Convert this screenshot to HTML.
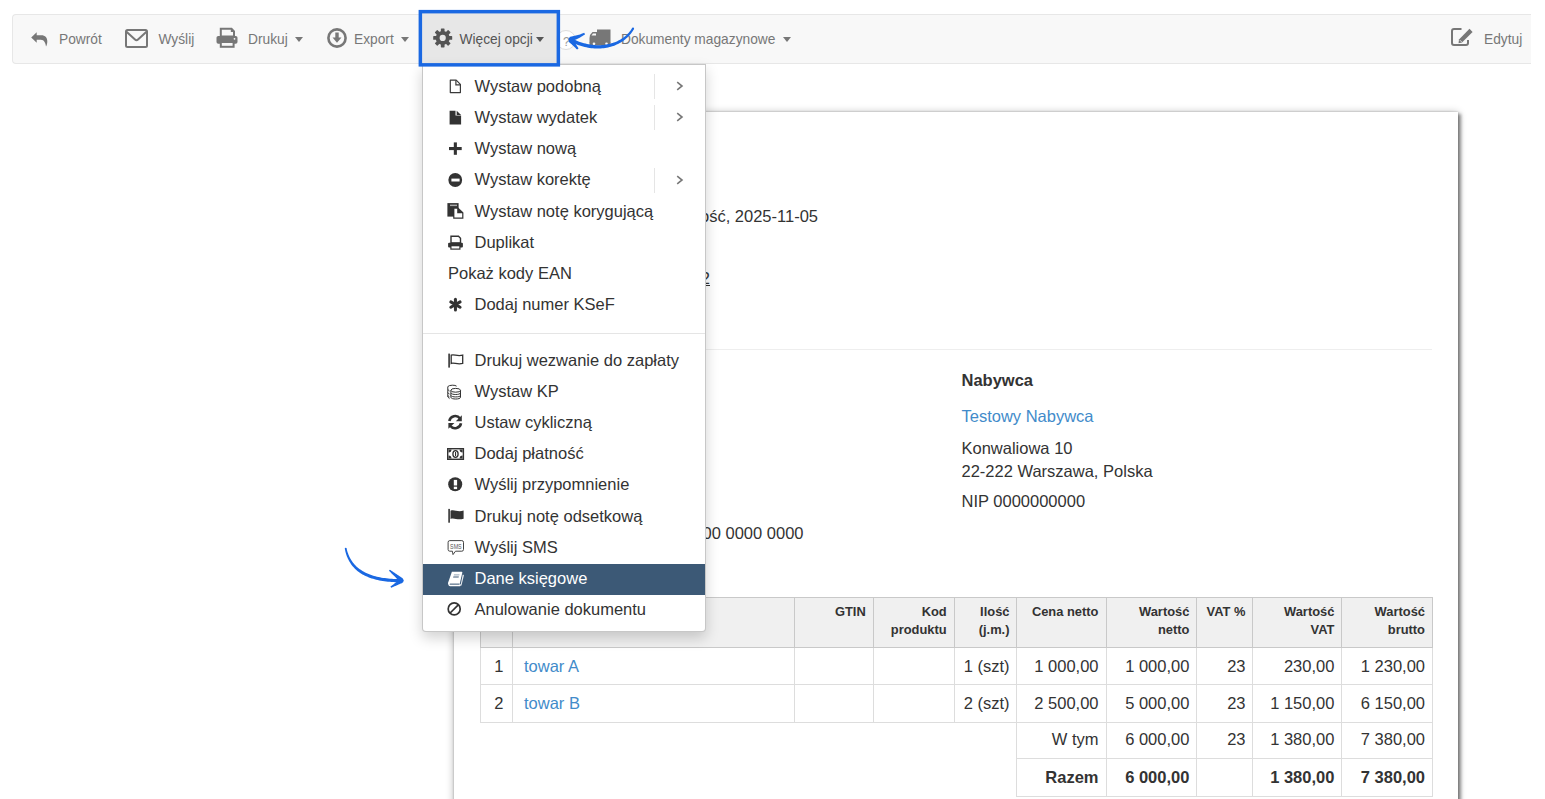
<!DOCTYPE html>
<html><head><meta charset="utf-8"><style>
html,body{margin:0;padding:0;background:#fff;width:1545px;height:799px;overflow:hidden;position:relative;font-family:"Liberation Sans",sans-serif}
.a{position:absolute}
.t{position:absolute;white-space:nowrap;line-height:20px}
svg{position:absolute;overflow:visible}
#tb{left:12px;top:14px;width:1518px;height:48px;background:#f8f8f8;border:1px solid #e7e7e7;border-right:none;border-radius:4px 0 0 4px}
.tbt{font-size:13.75px;color:#777}
.caret{position:absolute;width:0;height:0;border-left:4.5px solid transparent;border-right:4.5px solid transparent;border-top:5px solid #777}
#page{left:454px;top:112px;width:1004px;height:760px;background:#fff;box-shadow:0 1px 8px rgba(0,0,0,.3),0 0 2px rgba(0,0,0,.22),3px 2px 3px rgba(0,0,0,.38)}
.dt{font-size:16.5px;color:#333}
#menu{left:422px;top:64px;width:282px;height:566px;background:#fff;border:1px solid rgba(0,0,0,.22);border-radius:0 0 4px 4px;box-shadow:0 6px 14px rgba(0,0,0,.18)}
.mt{font-size:16.5px;color:#333}
</style></head><body>

<div id="tb" class="a"></div>
<svg style="left:31px;top:32px" width="16" height="15" viewBox="0 0 16 15"><path d="M0.2 5.6 L5.7 0.2 V3.3 H10.2 C14.3 3.3 16.6 6 16.3 10 C16.1 12 15.6 13.6 15 14.6 C14.6 11.3 13.3 7.8 9.8 7.8 H5.7 V10.8 Z" fill="#777"/></svg>
<div class="t tbt" style="left:59px;top:30px">Powrót</div>
<svg style="left:125px;top:29px" width="23" height="19" viewBox="0 0 23 19"><rect x="1" y="1" width="21" height="17" rx="1.5" fill="none" stroke="#777" stroke-width="2"/><path d="M1.5 2.8 L10 10.6 Q11.5 12 13 10.6 L21.5 2.8" fill="none" stroke="#777" stroke-width="2"/></svg>
<div class="t tbt" style="left:158.5px;top:30px">Wyślij</div>
<svg style="left:216px;top:27px" width="22" height="21" viewBox="0 0 22 21"><path d="M4.8 1.8 H15.5 L18 4.3 V9.5 H4.8 Z" fill="none" stroke="#777" stroke-width="2"/><path d="M14.8 1 V5 H18.5" fill="#777"/><rect x="0.5" y="9" width="21" height="7.8" rx="1.8" fill="#777"/><rect x="4.8" y="15" width="12.8" height="4.8" fill="#f8f8f8" stroke="#777" stroke-width="2"/><circle cx="18.5" cy="11.8" r="0.9" fill="#f8f8f8"/></svg>
<div class="t tbt" style="left:248px;top:30px">Drukuj</div>
<div class="caret" style="left:295px;top:37px"></div>
<svg style="left:327px;top:28px" width="20" height="20" viewBox="0 0 20 20"><circle cx="10" cy="10" r="8.6" fill="none" stroke="#777" stroke-width="2.6"/><path d="M8.3 4.5 L11.7 4.5 L11.7 9.5 L14.5 9.5 L10 14.8 L5.5 9.5 L8.3 9.5 Z" fill="#777"/></svg>
<div class="t tbt" style="left:354px;top:30px">Export</div>
<div class="caret" style="left:401px;top:37px"></div>
<div class="a" style="left:422px;top:13px;width:135px;height:50px;background:#e7e7e7"></div>
<svg style="left:0;top:0" width="1" height="1"><circle cx="442.7" cy="37.9" r="7.0" fill="#555"/><rect x="440.85" y="28.40" width="3.7" height="9.50" rx="0.6" fill="#555" transform="rotate(0 442.7 37.9)"/><rect x="440.85" y="28.40" width="3.7" height="9.50" rx="0.6" fill="#555" transform="rotate(45 442.7 37.9)"/><rect x="440.85" y="28.40" width="3.7" height="9.50" rx="0.6" fill="#555" transform="rotate(90 442.7 37.9)"/><rect x="440.85" y="28.40" width="3.7" height="9.50" rx="0.6" fill="#555" transform="rotate(135 442.7 37.9)"/><rect x="440.85" y="28.40" width="3.7" height="9.50" rx="0.6" fill="#555" transform="rotate(180 442.7 37.9)"/><rect x="440.85" y="28.40" width="3.7" height="9.50" rx="0.6" fill="#555" transform="rotate(225 442.7 37.9)"/><rect x="440.85" y="28.40" width="3.7" height="9.50" rx="0.6" fill="#555" transform="rotate(270 442.7 37.9)"/><rect x="440.85" y="28.40" width="3.7" height="9.50" rx="0.6" fill="#555" transform="rotate(315 442.7 37.9)"/><circle cx="442.7" cy="37.9" r="3.1" fill="#e7e7e7"/></svg>
<div class="t tbt" style="left:459.5px;top:30px;color:#555">Więcej opcji</div>
<div class="caret" style="left:536px;top:37px;border-top-color:#555"></div>
<div class="a" style="left:556px;top:30px;width:20px;height:20px;border-radius:50%;border:1px solid #ddd;background:#fff;box-sizing:border-box"></div>
<div class="t" style="left:563px;top:32px;font-size:12px;color:#999">?</div>
<svg style="left:589px;top:29px" width="23" height="17" viewBox="0 0 23 17"><path d="M8 0.5 H21.5 V13.5 H8 Z" fill="#777"/><path d="M0.5 9 L1 6 L3.5 3 H8 V13.5 H0.5 Z" fill="#777"/><path d="M2.5 6.5 L4 4.5 H7 V6.5 Z" fill="#f8f8f8"/><rect x="0.5" y="13" width="21" height="3.5" fill="#777"/><circle cx="5" cy="14.8" r="1.3" fill="#f8f8f8"/><circle cx="17.5" cy="14.8" r="1.3" fill="#f8f8f8"/></svg>
<div class="t tbt" style="left:621px;top:30px">Dokumenty magazynowe</div>
<div class="caret" style="left:783px;top:37px"></div>
<svg style="left:1451px;top:28px" width="23" height="18" viewBox="0 0 23 18"><path d="M10.5 1 H3 Q1 1 1 3 V15 Q1 17 3 17 H15 Q17 17 17 15 V12" fill="none" stroke="#777" stroke-width="2"/><path d="M18.5 0.8 L21.6 3.9 L11 14.5 L7.5 15.2 L8 11.5 Z" fill="#777"/><path d="M9 12.3 L10.5 13.8" stroke="#f8f8f8" stroke-width="1"/></svg>
<div class="t tbt" style="left:1484px;top:30px">Edytuj</div>

<div id="page" class="a"></div>
<div class="t dt" style="right:727px;top:206.4px">Termin płatności: całość, 2025-11-05</div>
<div class="t dt" style="right:835px;top:268px;text-decoration:underline">Nr 2</div>
<div class="a" style="left:480px;top:349px;width:952px;height:1px;background:#eee"></div>
<div class="t dt" style="left:961.5px;top:370px;font-weight:bold">Nabywca</div>
<div class="t dt" style="left:961.5px;top:406px;color:#428bca">Testowy Nabywca</div>
<div class="t dt" style="left:961.5px;top:437.7px">Konwaliowa 10</div>
<div class="t dt" style="left:961.5px;top:461px">22-222 Warszawa, Polska</div>
<div class="t dt" style="left:961.5px;top:491.2px">NIP 0000000000</div>
<div class="t dt" style="right:741.5px;top:523px">Nr konta: 00 0000 0000 0000 0000 0000</div>
<div class="a" style="left:480px;top:597px;width:952px;height:50px;background:#f0f0f0"></div>
<div class="a" style="left:480px;top:647px;width:1px;height:75px;background:#dddddd"></div>
<div class="a" style="left:512px;top:647px;width:1px;height:75px;background:#dddddd"></div>
<div class="a" style="left:794px;top:647px;width:1px;height:75px;background:#dddddd"></div>
<div class="a" style="left:873px;top:647px;width:1px;height:75px;background:#dddddd"></div>
<div class="a" style="left:954px;top:647px;width:1px;height:75px;background:#dddddd"></div>
<div class="a" style="left:1016px;top:647px;width:1px;height:150px;background:#dddddd"></div>
<div class="a" style="left:1106px;top:647px;width:1px;height:150px;background:#dddddd"></div>
<div class="a" style="left:1196px;top:647px;width:1px;height:150px;background:#dddddd"></div>
<div class="a" style="left:1252px;top:647px;width:1px;height:150px;background:#dddddd"></div>
<div class="a" style="left:1341px;top:647px;width:1px;height:150px;background:#dddddd"></div>
<div class="a" style="left:1432px;top:647px;width:1px;height:150px;background:#dddddd"></div>
<div class="a" style="left:480px;top:684px;width:953px;height:1px;background:#dddddd"></div>
<div class="a" style="left:480px;top:722px;width:953px;height:1px;background:#dddddd"></div>
<div class="a" style="left:1016px;top:758px;width:417px;height:1px;background:#dddddd"></div>
<div class="a" style="left:1016px;top:796px;width:417px;height:1px;background:#dddddd"></div>
<div class="a" style="left:480px;top:597px;width:953px;height:1px;background:#c9c9c9"></div>
<div class="a" style="left:480px;top:647px;width:953px;height:1px;background:#c9c9c9"></div>
<div class="a" style="left:480px;top:597px;width:1px;height:51px;background:#c9c9c9"></div>
<div class="a" style="left:512px;top:597px;width:1px;height:51px;background:#c9c9c9"></div>
<div class="a" style="left:794px;top:597px;width:1px;height:51px;background:#c9c9c9"></div>
<div class="a" style="left:873px;top:597px;width:1px;height:51px;background:#c9c9c9"></div>
<div class="a" style="left:954px;top:597px;width:1px;height:51px;background:#c9c9c9"></div>
<div class="a" style="left:1016px;top:597px;width:1px;height:51px;background:#c9c9c9"></div>
<div class="a" style="left:1106px;top:597px;width:1px;height:51px;background:#c9c9c9"></div>
<div class="a" style="left:1196px;top:597px;width:1px;height:51px;background:#c9c9c9"></div>
<div class="a" style="left:1252px;top:597px;width:1px;height:51px;background:#c9c9c9"></div>
<div class="a" style="left:1341px;top:597px;width:1px;height:51px;background:#c9c9c9"></div>
<div class="a" style="left:1432px;top:597px;width:1px;height:51px;background:#c9c9c9"></div>
<div class="t" style="right:679.3px;top:603.9px;font:bold 12.9px 'Liberation Sans';color:#333">GTIN</div>
<div class="t" style="right:598.3px;top:603.9px;font:bold 12.9px 'Liberation Sans';color:#333">Kod</div>
<div class="t" style="right:598.3px;top:622.4px;font:bold 12.9px 'Liberation Sans';color:#333">produktu</div>
<div class="t" style="right:535.5px;top:603.9px;font:bold 12.9px 'Liberation Sans';color:#333">Ilość</div>
<div class="t" style="right:535.5px;top:622.4px;font:bold 12.9px 'Liberation Sans';color:#333">(j.m.)</div>
<div class="t" style="right:446.5px;top:603.9px;font:bold 12.9px 'Liberation Sans';color:#333">Cena netto</div>
<div class="t" style="right:355.6px;top:603.9px;font:bold 12.9px 'Liberation Sans';color:#333">Wartość</div>
<div class="t" style="right:355.6px;top:622.4px;font:bold 12.9px 'Liberation Sans';color:#333">netto</div>
<div class="t" style="right:299.5px;top:603.9px;font:bold 12.9px 'Liberation Sans';color:#333">VAT %</div>
<div class="t" style="right:210.6px;top:603.9px;font:bold 12.9px 'Liberation Sans';color:#333">Wartość</div>
<div class="t" style="right:210.6px;top:622.4px;font:bold 12.9px 'Liberation Sans';color:#333">VAT</div>
<div class="t" style="right:120.0px;top:603.9px;font:bold 12.9px 'Liberation Sans';color:#333">Wartość</div>
<div class="t" style="right:120.0px;top:622.4px;font:bold 12.9px 'Liberation Sans';color:#333">brutto</div>
<div class="t" style="right:1041.5px;top:655.8px;font-size:16.5px;color:#333">1</div>
<div class="t dt" style="left:524px;top:655.8px;color:#428bca">towar A</div>
<div class="t" style="right:535.5px;top:655.8px;font-size:16.5px;color:#333">1 (szt)</div>
<div class="t" style="right:446.5px;top:655.8px;font-size:16.5px;color:#333">1 000,00</div>
<div class="t" style="right:355.6px;top:655.8px;font-size:16.5px;color:#333">1 000,00</div>
<div class="t" style="right:299.5px;top:655.8px;font-size:16.5px;color:#333">23</div>
<div class="t" style="right:210.6px;top:655.8px;font-size:16.5px;color:#333">230,00</div>
<div class="t" style="right:120.0px;top:655.8px;font-size:16.5px;color:#333">1 230,00</div>
<div class="t" style="right:1041.5px;top:692.6px;font-size:16.5px;color:#333">2</div>
<div class="t dt" style="left:524px;top:692.6px;color:#428bca">towar B</div>
<div class="t" style="right:535.5px;top:692.6px;font-size:16.5px;color:#333">2 (szt)</div>
<div class="t" style="right:446.5px;top:692.6px;font-size:16.5px;color:#333">2 500,00</div>
<div class="t" style="right:355.6px;top:692.6px;font-size:16.5px;color:#333">5 000,00</div>
<div class="t" style="right:299.5px;top:692.6px;font-size:16.5px;color:#333">23</div>
<div class="t" style="right:210.6px;top:692.6px;font-size:16.5px;color:#333">1 150,00</div>
<div class="t" style="right:120.0px;top:692.6px;font-size:16.5px;color:#333">6 150,00</div>
<div class="t" style="right:446.5px;top:729.4px;font-size:16.5px;color:#333">W tym</div>
<div class="t" style="right:355.6px;top:729.4px;font-size:16.5px;color:#333">6 000,00</div>
<div class="t" style="right:299.5px;top:729.4px;font-size:16.5px;color:#333">23</div>
<div class="t" style="right:210.6px;top:729.4px;font-size:16.5px;color:#333">1 380,00</div>
<div class="t" style="right:120.0px;top:729.4px;font-size:16.5px;color:#333">7 380,00</div>
<div class="t" style="right:446.5px;top:767.3px;font-size:16.5px;color:#333;font-weight:bold">Razem</div>
<div class="t" style="right:355.6px;top:767.3px;font-size:16.5px;color:#333;font-weight:bold">6 000,00</div>
<div class="t" style="right:210.6px;top:767.3px;font-size:16.5px;color:#333;font-weight:bold">1 380,00</div>
<div class="t" style="right:120.0px;top:767.3px;font-size:16.5px;color:#333;font-weight:bold">7 380,00</div>
<div id="menu" class="a"></div>
<div class="a" style="left:423px;top:333px;width:282px;height:1px;background:#e5e5e5"></div>
<div class="a" style="left:423px;top:563.5px;width:282px;height:31.2px;background:#3c5976"></div>
<div class="t mt" style="left:474.5px;top:76px">Wystaw podobną</div>
<div class="t mt" style="left:474.5px;top:107px">Wystaw wydatek</div>
<div class="t mt" style="left:474.5px;top:138px">Wystaw nową</div>
<div class="t mt" style="left:474.5px;top:169px">Wystaw korektę</div>
<div class="t mt" style="left:474.5px;top:201px">Wystaw notę korygującą</div>
<div class="t mt" style="left:474.5px;top:232px">Duplikat</div>
<div class="t mt" style="left:448px;top:263px">Pokaż kody EAN</div>
<div class="t mt" style="left:474.5px;top:294px">Dodaj numer KSeF</div>
<div class="t mt" style="left:474.5px;top:350px;color:#333">Drukuj wezwanie do zapłaty</div>
<div class="t mt" style="left:474.5px;top:381px;color:#333">Wystaw KP</div>
<div class="t mt" style="left:474.5px;top:412px;color:#333">Ustaw cykliczną</div>
<div class="t mt" style="left:474.5px;top:443px;color:#333">Dodaj płatność</div>
<div class="t mt" style="left:474.5px;top:474px;color:#333">Wyślij przypomnienie</div>
<div class="t mt" style="left:474.5px;top:506px;color:#333">Drukuj notę odsetkową</div>
<div class="t mt" style="left:474.5px;top:537px;color:#333">Wyślij SMS</div>
<div class="t mt" style="left:474.5px;top:568px;color:#fff">Dane księgowe</div>
<div class="t mt" style="left:474.5px;top:599px;color:#333">Anulowanie dokumentu</div>
<div class="a" style="left:654px;top:74.0px;width:1px;height:25px;background:#e5e5e5"></div>
<svg style="left:675.5px;top:81.0px" width="8" height="10" viewBox="0 0 8 10"><path d="M1.2 1.2 L6 5 L1.2 8.8" fill="none" stroke="#777" stroke-width="1.6"/></svg>
<div class="a" style="left:654px;top:105.2px;width:1px;height:25px;background:#e5e5e5"></div>
<svg style="left:675.5px;top:112.2px" width="8" height="10" viewBox="0 0 8 10"><path d="M1.2 1.2 L6 5 L1.2 8.8" fill="none" stroke="#777" stroke-width="1.6"/></svg>
<div class="a" style="left:654px;top:167.5px;width:1px;height:25px;background:#e5e5e5"></div>
<svg style="left:675.5px;top:174.5px" width="8" height="10" viewBox="0 0 8 10"><path d="M1.2 1.2 L6 5 L1.2 8.8" fill="none" stroke="#777" stroke-width="1.6"/></svg>
<svg style="left:0;top:0" width="1" height="1">
<g fill="#333" stroke="none">
<!-- file-o -->
<path d="M450.3 80.2 H456.2 L460.4 84.4 V92.6 H450.3 Z" fill="none" stroke="#3a3a3a" stroke-width="1.2" stroke-linejoin="round"/>
<path d="M455.9 80.2 V84.8 H460.4" fill="none" stroke="#3a3a3a" stroke-width="1.2"/>
<!-- file (filled) -->
<path d="M449.6 110.7 H455.5 V115.6 H461.1 V124.5 H449.6 Z"/>
<path d="M456.7 110.7 L461.1 115 H456.7 Z"/>
<!-- plus -->
<rect x="453.8" y="142.4" width="3.1" height="12.4"/>
<rect x="449" y="147" width="12.7" height="3.1"/>
<!-- minus circle -->
<circle cx="455.25" cy="180" r="6.9"/>
<rect x="451.4" y="178.6" width="8.2" height="2.9" fill="#fff"/>
<!-- copy / nota -->
<rect x="447.4" y="203.1" width="11.2" height="13.5"/>
<rect x="450" y="204.6" width="7" height="1.5" fill="#aaa"/>
<path d="M453.2 207.6 H458.1 L463.4 212.5 V218.7 H453.2 Z" fill="#333"/>
<path d="M454.4 208.8 H457.2 V213.3 H462.2 V217.5 H454.4 Z" fill="#fff"/>
<!-- print -->
<path d="M451 236.3 H458.5 L460.5 238.3 V243 H451 Z" fill="none" stroke="#333" stroke-width="1.4"/>
<rect x="448.1" y="242.8" width="14.8" height="4.8" rx="1"/>
<rect x="450.3" y="245.9" width="10.2" height="3.8"/>
<rect x="451.5" y="246.3" width="7.8" height="2.2" fill="#fff"/>
<!-- asterisk -->
<g stroke="#333" stroke-width="3" stroke-linecap="round">
<path d="M455.45 299.2 V310"/>
<path d="M450.8 301.9 L460.1 307.3"/>
<path d="M450.8 307.3 L460.1 301.9"/>
</g>
<!-- flag-o -->
<rect x="448.3" y="353.6" width="1.6" height="14"/>
<path d="M451.2 355.2 C454 353.8 457 356.8 462.7 355.2 V363.4 C457 365 454 362 451.2 363.4 Z" fill="none" stroke="#333" stroke-width="1.3"/>
<!-- coins / KP -->
<g fill="none" stroke="#333" stroke-width="1.0">
<path d="M456.6 386.2 C455.5 384.8 449 384.8 447.8 386.6 V397 L449.5 398.6"/>
<path d="M447.8 389.5 L449.5 391 M447.8 392.5 L449.5 394.3 M447.8 395.5 L449.5 397"/>
<ellipse cx="455.7" cy="390.3" rx="4.8" ry="1.9"/>
<path d="M450.9 390.3 V397.3 C450.9 399.6 460.5 399.6 460.5 397.3 V390.3"/>
<path d="M450.9 393 C451.5 395 460 395 460.5 393 M450.9 395.5 C451.5 397.4 460 397.4 460.5 395.5"/>
</g>
<!-- refresh -->
<path d="M449.3 421 A6 6 0 0 1 460 418.5" fill="none" stroke="#333" stroke-width="2.6"/>
<path d="M461.8 415.3 V421.2 H455.8 Z"/>
<path d="M461 423.2 A6 6 0 0 1 450.4 426" fill="none" stroke="#333" stroke-width="2.6"/>
<path d="M448.4 428.8 V422.9 H454.4 Z"/>
<!-- money -->
<rect x="447.7" y="448.7" width="15.7" height="10.6" fill="none" stroke="#333" stroke-width="1.4"/>
<path d="M448.5 449.5 H451.5 A3 3 0 0 1 448.5 452.5 Z M462.6 449.5 H459.6 A3 3 0 0 0 462.6 452.5 Z M448.5 458.5 H451.5 A3 3 0 0 0 448.5 455.5 Z M462.6 458.5 H459.6 A3 3 0 0 1 462.6 455.5 Z"/>
<ellipse cx="455.5" cy="454" rx="2.6" ry="3.4" fill="none" stroke="#333" stroke-width="1.3"/>
<rect x="455" y="452" width="1.1" height="4"/>
<!-- exclamation circle -->
<circle cx="455.2" cy="484.2" r="7"/>
<rect x="453.8" y="479.9" width="3.3" height="5.6" fill="#fff"/>
<rect x="453.8" y="486.7" width="3.3" height="2.4" fill="#fff"/>
<!-- flag -->
<rect x="448.3" y="508.9" width="1.6" height="13.8"/>
<path d="M450.5 510.8 C454 509 457.5 512.5 463.6 510.5 V518.7 C457.5 520.7 454 517.2 450.5 519 Z"/>
<!-- sms -->
<path d="M449.8 540.6 H461.8 Q463.5 540.6 463.5 542.3 V549.5 Q463.5 551.2 461.8 551.2 H455.5 L453 554.6 L452.4 551.2 H449.8 Q448.1 551.2 448.1 549.5 V542.3 Q448.1 540.6 449.8 540.6 Z" fill="none" stroke="#444" stroke-width="1"/>
<text x="455.9" y="548.6" font-family="Liberation Sans" font-size="6.6" text-anchor="middle" fill="#555" textLength="11.6" lengthAdjust="spacingAndGlyphs">SMS</text>
<!-- book (white) -->
<path d="M451.9 571.7 H461.6 Q462.5 571.8 462.3 572.8 L459.6 584.6 H449.6 Q447.6 584.6 448 582.9 Z" fill="#fff"/>
<path d="M448.4 583.6 Q448.2 586.3 450.2 586.3 H459.3 Q460.3 586.2 460.6 585.4 L460.9 584.2 H449.6 Z" fill="#fff"/>
<rect x="449.8" y="583.6" width="9.6" height="1" fill="#3c5976"/>
<path d="M462.9 574.4 Q464.2 574.6 463.9 575.6 L461.6 585 Q461.3 585.9 460.4 585.9 L462.6 575 Z" fill="#e8ecf0"/>
<path d="M454 574.2 H459.6 L459.3 575.5 H453.7 Z" fill="#a9b6c3"/>
<path d="M453.4 576.5 H458.9 L458.6 577.6 H453.1 Z" fill="#3c5976"/>
<!-- ban -->
<circle cx="454.2" cy="608.9" r="6" fill="none" stroke="#333" stroke-width="1.7"/>
<path d="M450.1 613 L458.3 604.8" stroke="#333" stroke-width="1.7"/>
</g>
</svg>

<svg style="left:0;top:0" width="1" height="1"><rect x="420.35" y="11.65" width="138" height="53.2" fill="none" stroke="#1a68e2" stroke-width="3.5"/></svg>
<svg style="left:0;top:0" width="1" height="1"><path d="M632.14 28.09 L631.53 29.06 L630.89 30.00 L630.21 30.92 L629.50 31.82 L628.75 32.69 L627.97 33.54 L627.15 34.37 L626.30 35.17 L625.42 35.95 L624.50 36.69 L623.56 37.42 L622.58 38.11 L621.58 38.78 L620.54 39.41 L619.48 40.02 L618.39 40.59 L617.27 41.14 L616.12 41.65 L614.95 42.13 L613.76 42.58 L612.54 42.99 L611.30 43.37 L610.03 43.71 L608.74 44.01 L607.43 44.31 L606.10 44.55 L604.75 44.76 L603.38 44.93 L601.98 45.06 L600.57 45.14 L599.14 45.19 L597.69 45.20 L596.22 45.16 L594.73 45.07 L593.23 44.94 L591.71 44.77 L590.18 44.55 L588.63 44.28 L587.07 43.97 L585.50 43.60 L583.91 43.19 L582.31 42.73 L580.70 42.21 L579.07 41.65 L577.44 41.03 L575.80 40.35 L574.15 39.62 L572.49 38.84 L570.80 37.99 L569.20 41.21 L570.93 42.07 L572.68 42.87 L574.42 43.62 L576.16 44.32 L577.88 44.95 L579.60 45.54 L581.31 46.06 L583.00 46.54 L584.69 46.96 L586.36 47.33 L588.02 47.65 L589.67 47.91 L591.30 48.13 L592.91 48.30 L594.52 48.42 L596.10 48.49 L597.67 48.51 L599.21 48.49 L600.74 48.42 L602.25 48.31 L603.74 48.16 L605.21 47.96 L606.66 47.72 L608.08 47.44 L609.49 47.12 L610.86 46.75 L612.20 46.33 L613.53 45.88 L614.82 45.38 L616.08 44.86 L617.32 44.29 L618.53 43.70 L619.70 43.07 L620.85 42.40 L621.97 41.71 L623.05 40.98 L624.10 40.22 L625.11 39.44 L626.10 38.62 L627.04 37.78 L627.95 36.91 L628.83 36.01 L629.66 35.09 L630.46 34.15 L631.22 33.18 L631.95 32.19 L632.63 31.18 L633.27 30.15 L633.86 29.11 Z" fill="#1a68e2"/><path d="M584.12 32.64 L583.08 33.17 L582.07 33.62 L581.04 34.02 L580.02 34.38 L578.99 34.70 L577.95 34.99 L576.91 35.25 L575.86 35.50 L574.80 35.75 L573.73 35.99 L572.65 36.23 L571.56 36.49 L570.47 36.77 L569.39 37.07 L571.21 41.73 L572.16 41.24 L573.10 40.77 L574.06 40.31 L575.04 39.86 L576.04 39.40 L577.05 38.93 L578.07 38.45 L579.09 37.94 L580.11 37.41 L581.13 36.85 L582.15 36.25 L583.15 35.60 L584.13 34.90 L585.08 34.16 Z" fill="#1a68e2"/><path d="M578.50 48.44 L578.00 47.62 L577.50 46.82 L577.01 46.03 L576.53 45.26 L576.05 44.50 L575.59 43.76 L575.14 43.02 L574.70 42.30 L574.26 41.59 L573.84 40.90 L573.42 40.21 L573.02 39.54 L572.62 38.87 L572.24 38.22 L568.36 41.38 L568.93 41.89 L569.50 42.42 L570.09 42.95 L570.68 43.49 L571.28 44.04 L571.89 44.60 L572.51 45.18 L573.14 45.76 L573.77 46.36 L574.42 46.97 L575.08 47.60 L575.74 48.24 L576.41 48.89 L577.10 49.56 Z" fill="#1a68e2"/><path d="M344.82 548.79 L345.08 550.11 L345.38 551.41 L345.71 552.69 L346.08 553.95 L346.48 555.18 L346.93 556.39 L347.41 557.57 L347.92 558.73 L348.48 559.86 L349.07 560.97 L349.69 562.06 L350.36 563.11 L351.06 564.15 L351.81 565.15 L352.59 566.13 L353.40 567.09 L354.26 568.01 L355.15 568.91 L356.09 569.78 L357.06 570.63 L358.06 571.44 L359.11 572.23 L360.19 572.99 L361.31 573.73 L362.48 574.41 L363.69 575.07 L364.93 575.69 L366.21 576.29 L367.52 576.86 L368.88 577.40 L370.26 577.91 L371.69 578.40 L373.15 578.85 L374.64 579.28 L376.18 579.67 L377.74 580.04 L379.35 580.38 L380.99 580.69 L382.67 580.97 L384.39 581.22 L386.14 581.44 L387.93 581.64 L389.76 581.81 L391.63 581.94 L393.53 582.05 L395.47 582.13 L397.45 582.18 L399.47 582.21 L401.51 582.20 L401.49 579.00 L399.47 579.01 L397.50 579.00 L395.57 578.96 L393.68 578.89 L391.83 578.79 L390.01 578.67 L388.24 578.51 L386.50 578.33 L384.81 578.12 L383.15 577.89 L381.53 577.63 L379.95 577.34 L378.41 577.02 L376.90 576.68 L375.44 576.31 L374.01 575.91 L372.62 575.49 L371.27 575.04 L369.96 574.56 L368.68 574.06 L367.45 573.53 L366.24 572.98 L365.08 572.40 L363.95 571.79 L362.87 571.16 L361.80 570.52 L360.77 569.86 L359.78 569.17 L358.81 568.45 L357.89 567.71 L356.99 566.94 L356.14 566.14 L355.31 565.32 L354.52 564.47 L353.76 563.59 L353.03 562.69 L352.34 561.76 L351.68 560.80 L351.05 559.82 L350.46 558.80 L349.90 557.76 L349.37 556.69 L348.87 555.60 L348.41 554.47 L347.98 553.32 L347.58 552.14 L347.21 550.93 L346.88 549.69 L346.58 548.41 Z" fill="#1a68e2"/><path d="M388.95 570.74 L389.75 571.54 L390.55 572.33 L391.34 573.13 L392.14 573.93 L392.93 574.72 L393.73 575.52 L394.53 576.32 L395.32 577.11 L396.12 577.91 L396.91 578.71 L397.71 579.51 L398.51 580.30 L399.30 581.10 L400.10 581.90 L402.90 578.50 L401.97 577.87 L401.04 577.24 L400.10 576.61 L399.17 575.98 L398.24 575.35 L397.31 574.71 L396.37 574.08 L395.44 573.45 L394.51 572.82 L393.58 572.19 L392.64 571.56 L391.71 570.92 L390.78 570.29 L389.85 569.66 Z" fill="#1a68e2"/><path d="M391.16 587.80 L391.97 587.45 L392.79 587.09 L393.61 586.73 L394.43 586.37 L395.25 586.01 L396.07 585.66 L396.89 585.30 L397.70 584.94 L398.52 584.58 L399.34 584.23 L400.16 583.87 L400.98 583.51 L401.80 583.15 L402.62 582.80 L400.38 579.00 L399.67 579.55 L398.96 580.09 L398.25 580.63 L397.54 581.17 L396.83 581.72 L396.12 582.26 L395.41 582.80 L394.70 583.34 L393.99 583.89 L393.28 584.43 L392.57 584.97 L391.86 585.51 L391.15 586.05 L390.44 586.60 Z" fill="#1a68e2"/><circle cx="570.6" cy="39.6" r="2.1" fill="#1a68e2"/><circle cx="401.5" cy="580.6" r="2.2" fill="#1a68e2"/><circle cx="633" cy="28.6" r="1.1" fill="#1a68e2"/><circle cx="345.7" cy="548.6" r="0.9" fill="#1a68e2"/></svg>
</body></html>
